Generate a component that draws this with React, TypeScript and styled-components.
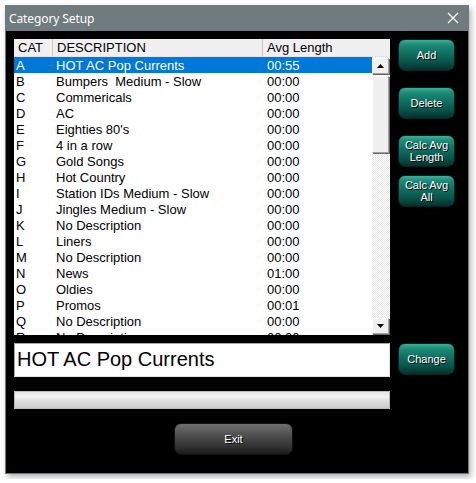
import React from "react";
import styled, { createGlobalStyle } from "styled-components";

const Global = createGlobalStyle`
  html, body { margin: 0; padding: 0; background: #ffffff; }
  body { font-family: "Liberation Sans", Arial, sans-serif; }
`;

const Page = styled.div`
  padding: 5px;
`;

const Window = styled.div`
  width: 464px;
  height: 469px;
  box-sizing: border-box;
  border: 1px solid #6f7b7e;
  border-top: none;
  box-shadow: 2px 3px 6px rgba(0, 0, 0, 0.3);
  display: flex;
  flex-direction: column;
  background: #000;
`;

const TitleBar = styled.div`
  height: 26px;
  flex: none;
  background: #6f7b7e;
  display: flex;
  align-items: center;
  justify-content: space-between;
  padding: 0 10px 0 4px;
  margin: 0 -1px;
`;

const Title = styled.span`
  font-family: "Noto Sans", "Open Sans", sans-serif;
  font-size: 12px;
  color: #ffffff;
  letter-spacing: -0.1px;
`;

const CloseIcon = styled.svg`
  width: 12px;
  height: 12px;
  display: block;
`;

const Body = styled.div`
  flex: 1;
  display: grid;
  grid-template-columns: 376px 57px;
  grid-template-rows: 296px 34px 24px 44px;
  column-gap: 8px;
  row-gap: 8px;
  padding: 8px 13px 0 8px;
  align-content: start;
`;

const List = styled.div`
  background: #ffffff;
  display: flex;
  flex-direction: column;
  overflow: hidden;
  font-family: "Liberation Sans", Arial, sans-serif;
  font-size: 13px;
  color: #000;
`;

const Header = styled.div`
  height: 18px;
  flex: none;
  display: grid;
  grid-template-columns: 39px 210px 1fr;
  background: #f0f0f0;
  border-bottom: 1px solid #e5e5e5;
  box-sizing: border-box;
`;

const HeaderCell = styled.div<{ $last?: boolean }>`
  padding-left: 4px;
  line-height: 17px;
  border-right: ${(p) => (p.$last ? "none" : "1px solid #c8c8c8")};
`;

const ListBody = styled.div`
  flex: 1;
  display: flex;
  min-height: 0;
`;

const Rows = styled.div`
  flex: 1;
  overflow: hidden;
`;

const Row = styled.div<{ $sel?: boolean }>`
  height: 16px;
  display: grid;
  grid-template-columns: 40px 210px 1fr;
  line-height: 17px;
  background: ${(p) => (p.$sel ? "#0078d7" : "transparent")};
  color: ${(p) => (p.$sel ? "#ffffff" : "#000000")};
  white-space: pre;
`;

const Cell = styled.div<{ $pad: number }>`
  padding-left: ${(p) => p.$pad}px;
  overflow: hidden;
`;

const ScrollBar = styled.div`
  width: 17px;
  flex: none;
  display: flex;
  flex-direction: column;
  padding: 1px 1px 1px 0;
  background-color: #ffffff;
  background-image: repeating-conic-gradient(#e6e6e6 0 25%, #ffffff 0 50%);
  background-size: 2px 2px;
`;

const ArrowBtn = styled.div`
  height: 16px;
  flex: none;
  box-sizing: border-box;
  background: #f0f0f0;
  border-top: 1px solid #ffffff;
  border-left: 1px solid #ffffff;
  border-right: 1px solid #a0a0a0;
  border-bottom: 1px solid #a0a0a0;
  box-shadow: 1px 1px 0 #696969;
  display: flex;
  align-items: center;
  justify-content: center;
`;

const Thumb = styled.div`
  height: 77px;
  flex: none;
  margin-top: 2px;
  box-sizing: border-box;
  background: #f0f0f0;
  border-top: 1px solid #ffffff;
  border-left: 1px solid #ffffff;
  border-right: 1px solid #a0a0a0;
  border-bottom: 1px solid #a0a0a0;
  box-shadow: 1px 1px 0 #696969;
`;

const Spacer = styled.div`
  flex: 1;
`;

const ButtonCol = styled.div`
  display: flex;
  flex-direction: column;
`;

const TealButton = styled.button<{ $gap?: number }>`
  width: 57px;
  height: 32px;
  margin-top: ${(p) => p.$gap ?? 0}px;
  padding: 0;
  border: 1px solid #04241f;
  border-radius: 7px;
  background: linear-gradient(
    to bottom,
    #3fae9b 0%,
    #1d8a78 16%,
    #107262 42%,
    #0a564b 72%,
    #05302a 100%
  );
  color: #ffffff;
  font-family: "Liberation Sans", Arial, sans-serif;
  font-size: 11px;
  line-height: 12px;
  text-shadow: 1px 1px 0 #000000;
  cursor: pointer;
  box-sizing: border-box;
`;

const TextBox = styled.div`
  background: #ffffff;
  box-sizing: border-box;
  border: 1px solid #a5a5a5;
  border-right-color: #e3e3e3;
  border-bottom-color: #e3e3e3;
  font-family: "Liberation Sans", Arial, sans-serif;
  font-size: 20px;
  line-height: 30px;
  padding-left: 2px;
  color: #000;
`;

const Progress = styled.div`
  margin-top: 6px;
  height: 18px;
  box-sizing: border-box;
  border: 1px solid #bcbcbc;
  background: linear-gradient(
    to bottom,
    #e6e6e6 0%,
    #f4f4f4 30%,
    #dedede 55%,
    #cbcbcb 100%
  );
`;

const ExitButton = styled.button`
  grid-column: 1 / -1;
  justify-self: center;
  margin-top: 6px;
  width: 119px;
  height: 32px;
  padding: 0;
  border: 1px solid #111;
  border-radius: 7px;
  background: linear-gradient(
    to bottom,
    #707070 0%,
    #555555 30%,
    #3a3a3a 65%,
    #1c1c1c 100%
  );
  color: #ffffff;
  font-family: "Liberation Sans", Arial, sans-serif;
  font-size: 11px;
  text-shadow: 1px 1px 0 #000;
  box-sizing: border-box;
  transform: translateX(-1px);
`;

const data: [string, string, string][] = [
  ["A", "HOT AC Pop Currents", "00:55"],
  ["B", "Bumpers  Medium - Slow", "00:00"],
  ["C", "Commericals", "00:00"],
  ["D", "AC", "00:00"],
  ["E", "Eighties 80's", "00:00"],
  ["F", "4 in a row", "00:00"],
  ["G", "Gold Songs", "00:00"],
  ["H", "Hot Country", "00:00"],
  ["I", "Station IDs Medium - Slow", "00:00"],
  ["J", "Jingles Medium - Slow", "00:00"],
  ["K", "No Description", "00:00"],
  ["L", "Liners", "00:00"],
  ["M", "No Description", "00:00"],
  ["N", "News", "01:00"],
  ["O", "Oldies", "00:00"],
  ["P", "Promos", "00:01"],
  ["Q", "No Description", "00:00"],
  ["R", "No Description", "00:00"],
];

const Tri = ({ up }: { up?: boolean }) => (
  <svg width="7" height="4" viewBox="0 0 7 4">
    <polygon points={up ? "0,4 7,4 3.5,0" : "0,0 7,0 3.5,4"} fill="#000" />
  </svg>
);

export default function App() {
  return (
    <>
      <Global />
      <Page>
        <Window>
          <TitleBar>
            <Title>Category Setup</Title>
            <CloseIcon viewBox="0 0 12 12">
              <path d="M1 1 L11 11 M11 1 L1 11" stroke="#ffffff" strokeWidth="1.2" />
            </CloseIcon>
          </TitleBar>
          <Body>
            <List>
              <Header>
                <HeaderCell>CAT</HeaderCell>
                <HeaderCell>DESCRIPTION</HeaderCell>
                <HeaderCell $last>Avg Length</HeaderCell>
              </Header>
              <ListBody>
                <Rows>
                  {data.map(([c, d, a], i) => (
                    <Row key={c} $sel={i === 0}>
                      <Cell $pad={2}>{c}</Cell>
                      <Cell $pad={2}>{d}</Cell>
                      <Cell $pad={3}>{a}</Cell>
                    </Row>
                  ))}
                </Rows>
                <ScrollBar>
                  <ArrowBtn>
                    <Tri up />
                  </ArrowBtn>
                  <Thumb />
                  <Spacer />
                  <ArrowBtn>
                    <Tri />
                  </ArrowBtn>
                </ScrollBar>
              </ListBody>
            </List>
            <ButtonCol>
              <TealButton>Add</TealButton>
              <TealButton $gap={16}>Delete</TealButton>
              <TealButton $gap={16}>
                Calc Avg
                <br />
                Length
              </TealButton>
              <TealButton $gap={8}>
                Calc Avg
                <br />
                All
              </TealButton>
            </ButtonCol>
            <TextBox>HOT AC Pop Currents</TextBox>
            <TealButton>Change</TealButton>
            <Progress />
            <div />
            <ExitButton>Exit</ExitButton>
          </Body>
        </Window>
      </Page>
    </>
  );
}
